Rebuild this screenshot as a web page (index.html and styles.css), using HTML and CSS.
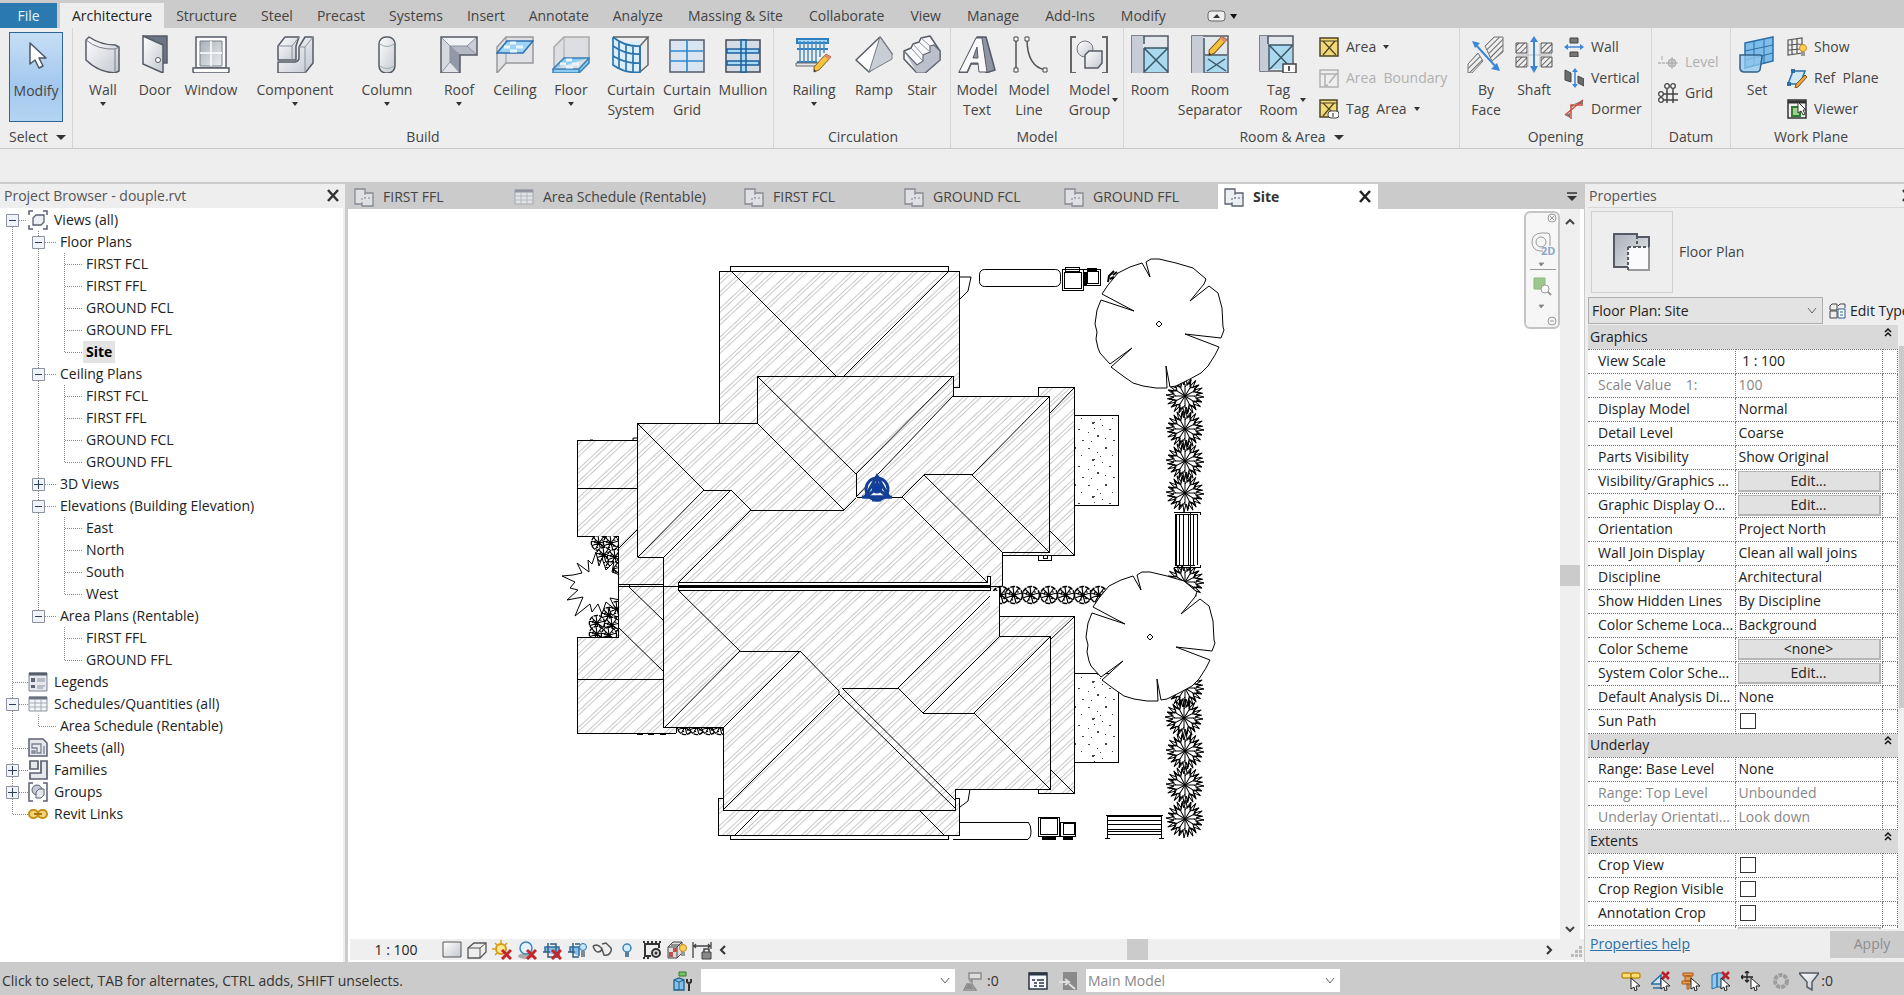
FILE: index.html
```html
<!DOCTYPE html>
<html lang="en">
<head>
<meta charset="utf-8">
<title>douple.rvt - Floor Plan: Site</title>
<link rel="stylesheet" href="styles.css">
</head>
<body>
<svg class="sprite" aria-hidden="true">
<defs>
<linearGradient id="gm" x1="0" y1="0" x2="1" y2="1"><stop offset="0" stop-color="#ffffff"/><stop offset="1" stop-color="#c3c7d0"/></linearGradient>
<linearGradient id="gd" x1="0" y1="0" x2="1" y2="1"><stop offset="0" stop-color="#a9aeb8"/><stop offset="1" stop-color="#eceef2"/></linearGradient>
<pattern id="hatch" width="21" height="21" patternUnits="userSpaceOnUse" patternTransform="rotate(-43)"><path d="M0 2.500H21M0 5.500H21M0 11.500H21M0 14.500H21" stroke="#c9c9c9" stroke-width="1" fill="none"/></pattern>
<pattern id="earth" width="4" height="4" patternUnits="userSpaceOnUse" patternTransform="rotate(45)"><path d="M0 0V4" stroke="#666" stroke-width="2"/></pattern>
<pattern id="dots" width="31" height="37" patternUnits="userSpaceOnUse"><path d="M3 4h2v1h-2zM12 8h1v1h-1zM20 3h2v2h-2zM27 11h1v1h-1zM7 15h3v1h-1v1h-2zM17 18h1v1h-1zM24 22h2v1h-2zM3 25h1v1h-1zM12 28h2v2h-2zM20 31h1v1h-1zM28 33h2v1h-2zM6 34h1v1h-1zM15 12h1v1h-1zM9 21h1v1h-1z" fill="#444"/></pattern>
</defs>
<symbol id="i-cursor" viewBox="0 0 38 38"><path d="M13 7v21l5-4 4 8 4-2-4-8h7z" fill="#fff" stroke="#4a5566" stroke-width="1.500" stroke-linejoin="round"/></symbol>
<symbol id="i-wall" viewBox="0 0 38 38"><path d="M2 5l3-3q12 8 26 8l4 2v24l-4 2q-17-1-29-13z" fill="url(#gm)" stroke="#555b66" stroke-width="1.500" stroke-linejoin="round"/><path d="M2 5q12 10 29 9v23M31 14l4-2" fill="none" stroke="#777d88"/></symbol>
<symbol id="i-door" viewBox="0 0 38 38"><path d="M7 1h24v27h-4" fill="#6d7584" stroke="#555b66" stroke-width="1.500"/><path d="M7 1l20 9v28L7 29z" fill="url(#gm)" stroke="#555b66" stroke-width="1.500"/><circle cx="22" cy="25" r="2.500" fill="#fff" stroke="#555"/></symbol>
<symbol id="i-window" viewBox="0 0 38 38"><path d="M4 2h30v31H4z" fill="#fff" stroke="#555b66" stroke-width="1.500"/><path d="M8 6h22v25H8z" fill="url(#gd)" stroke="#777d88"/><path d="M19 6v25M8 18h22" stroke="#fff" stroke-width="1.500"/><path d="M1 33h36v3q0 2-2 2H3q-2 0-2-2z" fill="#fafafa" stroke="#555b66" stroke-width="1.500"/></symbol>
<symbol id="i-component" viewBox="0 0 38 38"><path d="M2 11L9 2h14l-3 9v14H2z" fill="url(#gm)" stroke="#555b66" stroke-width="1.500" stroke-linejoin="round"/><path d="M2 11h14l7-9M16 11v14" fill="none" stroke="#8a909c"/><path d="M23 12l6-10h8v26l-8 10H2V27h17q4-1 4-4z" fill="url(#gm)" stroke="#555b66" stroke-width="1.500" stroke-linejoin="round"/><path d="M23 12h6v26M29 12l8-10" fill="none" stroke="#8a909c"/></symbol>
<symbol id="i-column" viewBox="0 0 38 38"><rect x="11" y="2" width="16" height="36" rx="7" fill="url(#gm)" stroke="#555b66" stroke-width="1.500"/><path d="M12 9q7 5 14 0M12 31q7 5 14 0" fill="none" stroke="#9aa"/></symbol>
<symbol id="i-roof" viewBox="0 0 38 38"><path d="M1 2h36v18H20v18H1z" fill="#f2f3f6"/><path d="M1 2l9 9v16L1 38z" fill="#d5d8df"/><path d="M10 11l10 9v18l-10-11z" fill="#9198a6"/><path d="M10 11h17l10 9H20z" fill="#b4b9c5"/><path d="M37 2L27 11l10 9z" fill="#c9cdd6"/><path d="M1 38l9-11 10 11z" fill="#e2e4ea"/><path d="M1 2l9 9h17l10-9M10 11v16L1 38M10 27l10 11M10 11l10 9M27 11l10 9" fill="none" stroke="#8b919e"/><path d="M1 2h36v18H20v18H1z" fill="none" stroke="#555b66" stroke-width="1.500"/></symbol>
<symbol id="i-ceiling" viewBox="0 0 38 38"><path d="M1 12L10 2h27v26H10L1 38z" fill="#dfe1e5" stroke="#999" stroke-width="1.500"/><path d="M10 2v26" stroke="#999"/><path d="M1 18L11 6h26L27 18z" fill="#9dd3f5" stroke="#2f6fb0" stroke-width="1.500"/><path d="M8 12h6M20 12h7M14 8h6M14 16h7" stroke="#e8f6ff" stroke-width="3"/></symbol>
<symbol id="i-floor" viewBox="0 0 38 38"><path d="M2 12L12 2h25v22L28 35H2z" fill="#dcdee2" stroke="#aaa" stroke-width="1.500"/><path d="M12 2v22" stroke="#aaa"/><path d="M1 34l11-11h25L27 34zM1 34v4h26l10-10v-5M27 34v4" fill="#8dcbf2" stroke="#3a7fb5" stroke-width="1.500"/><path d="M8 29h6M20 29h7M14 25h6M14 32h7" stroke="#e8f6ff" stroke-width="3"/></symbol>
<symbol id="i-csys" viewBox="0 0 38 38"><path d="M1 2q12 9 27 3v33Q12 38 1 30z" fill="#d9effc"/><path d="M1 2h35L28 11v26l8-7V2" fill="#e9ebef" stroke="#666" stroke-width="1.500"/><path d="M1 2v28q13 9 27 7V11Q13 12 1 2M7 6v28M14 9v28M21 11v27M1 11q13 9 27 8M1 21q13 8 27 7" fill="none" stroke="#2d74ad" stroke-width="1.700"/></symbol>
<symbol id="i-cgrid" viewBox="0 0 38 38"><path d="M2 5h34v32H2z" fill="#d9e6f2" stroke="#555b66" stroke-width="1.500"/><path d="M19 5v32M2 16h34M2 26h34" stroke="#2f8bd0" stroke-width="1.700"/></symbol>
<symbol id="i-mullion" viewBox="0 0 38 38"><path d="M2 5h34v32H2z" fill="#d4dde6" stroke="#444b56" stroke-width="1.500"/><path d="M3 14h32v4H3zM3 26h32v4H3zM17 5h5v32h-5z" fill="#a6daf8" stroke="#1d5f9a" stroke-width="1.500"/></symbol>
<symbol id="i-pencil" viewBox="0 0 20 20"><path d="M14 1l5 3L7 17l-5 2 0-5z" fill="#f5c33c" stroke="#7c5a20"/><path d="M14 1l5 3-2 3-5-4z" fill="#e08a70"/><path d="M2 19l0-3 2 2z" fill="#333"/></symbol>
<symbol id="i-railing" viewBox="0 0 38 38"><path d="M2 4h31v4H2zM2 14h31M2 27h20" fill="#a6daf8" stroke="#2d7fc4" stroke-width="2"/><path d="M5 6v22M9 6v22M13 6v22M17 6v22M21 6v20M25 6v16M29 6v12" stroke="#4a8cc0" stroke-width="1.500"/><path d="M1 28h22v3H1z" fill="#e8e8e8" stroke="#666"/><use href="#i-pencil" x="17" y="18" width="20" height="20"/></symbol>
<symbol id="i-ramp" viewBox="0 0 38 38"><path d="M1 25L25 2l12 17L14 37z" fill="#fff" stroke="#555b66" stroke-width="1.500" stroke-linejoin="round"/><path d="M25 2l12 17v5L14 37z" fill="#c9cdd5" stroke="#777d88"/></symbol>
<symbol id="i-stair" viewBox="0 0 38 38"><path d="M1 16l7-3 2-4 6-2 2-4 9-2 10 15v9L22 38h-8L1 24z" fill="#fafafc" stroke="#555b66" stroke-width="1.500" stroke-linejoin="round"/><path d="M1 16l13 14 6-4v-6l7-3v-6l4-1 6 6v9L22 38h-8" fill="#bcc0ca" stroke="#666c78" stroke-width="1.200"/><path d="M8 13l12 13M10 9l10 11M16 7l11 10M18 3l9 8" stroke="#8a909c"/></symbol>
<symbol id="i-mtext" viewBox="0 0 38 38"><path d="M19 2h9l9 33-9 3-2-9H13l-4 9H1z" fill="#8f95a3" stroke="#555b66" stroke-width="1.500" stroke-linejoin="round"/><path d="M18 3h6l5 34h-8l-1-9h-7l-4 9H1zM19 12l-4 11h5z" fill="#fafafa" fill-rule="evenodd" stroke="#555b66"/></symbol>
<symbol id="i-mline" viewBox="0 0 38 38"><path d="M6 4v32M17 4q0 28 19 31" fill="none" stroke="#555" stroke-width="1.500"/><path d="M4 2h4v4H4zM4 33h4v4H4zM15 2h4v4h-4zM33 33h4v4h-4z" fill="#fff" stroke="#444"/></symbol>
<symbol id="i-mgroup" viewBox="0 0 38 38"><path d="M6 2H1v36h5M32 2h5v36h-5" fill="none" stroke="#666" stroke-width="2"/><circle cx="15" cy="14" r="8" fill="url(#gm)" stroke="#777"/><path d="M15 20l4-4h13v12l-4 5H15z" fill="url(#gm)" stroke="#555b66" stroke-width="1.500"/></symbol>
<symbol id="i-room" viewBox="0 0 38 38"><path d="M1 1h36v37H1z" fill="#e4e7ec" stroke="#555b66" stroke-width="1.500"/><path d="M1 1h11v37H1z" fill="#c7ccd6"/><path d="M13 13h23v24H13z" fill="#a8d9ee"/><path d="M13 1v8M13 13h24M13 13v24M13 13l24 24M37 13L13 37" stroke="#3c5566" stroke-width="1.500"/></symbol>
<symbol id="i-roomsep" viewBox="0 0 38 38"><path d="M1 1h36v37H1z" fill="#e4e7ec" stroke="#555b66" stroke-width="1.500"/><path d="M1 1h11v37H1z" fill="#c7ccd6"/><path d="M14 21h22v16H14z" fill="#a8d9ee"/><path d="M13 3v20M14 20h22M16 36l18-12M17 24l18 12M13 20v17" stroke="#3c5566" stroke-width="1.500"/><use href="#i-pencil" x="16" y="0" width="21" height="22"/></symbol>
<symbol id="i-tagroom" viewBox="0 0 38 38"><path d="M1 1h33v35H1z" fill="#e4e7ec" stroke="#555b66" stroke-width="1.500"/><path d="M1 1h8v35H1z" fill="#c7ccd6"/><path d="M11 10h22v24H11z" fill="#a8d9ee"/><path d="M9 1v8M9 10h25M10 10v25M11 11l22 23M33 11L11 34" stroke="#3c5566" stroke-width="1.500"/><path d="M24 29h13v9H24z" fill="#fff" stroke="#444" stroke-width="1.500"/><path d="M30 31v5" stroke="#222" stroke-width="1.500"/></symbol>
<symbol id="i-byface" viewBox="0 0 38 38"><path d="M18 11l9-9h9v15l-11 9zM1 29l10-11 5 8-11 12H1z" fill="url(#earth)" stroke="#777"/><path d="M8 9l22 24" stroke="#3b86d8" stroke-width="2"/><path d="M5 6l8 2-5 5zM33 36l-9-2 6-6z" fill="#3b86d8"/></symbol>
<symbol id="i-shaft" viewBox="0 0 38 38"><path d="M1 8h11v10H1zM26 8h11v10H26zM1 22h11v10H1zM26 22h11v10H26z" fill="url(#earth)" stroke="#555"/><path d="M1 20h36M13 8v24M25 8v24" stroke="#bbb"/><path d="M19 4v31" stroke="#3b86d8" stroke-width="2"/><path d="M15 7l4-6 4 6zM15 31l4 7 4-7z" fill="#3b86d8"/></symbol>
<symbol id="i-set" viewBox="0 0 38 38"><path d="M7 8l28-6v24L7 33z" fill="#7dbdeb" stroke="#2d6ea8" stroke-width="1.500"/><path d="M16 6v25M26 4v25M7 16l28-6M7 25l28-7" stroke="#2d6ea8"/><path d="M2 20h20q2 0 2 2l-2 13q-1 2-3 2H6q-3 0-4-3z" fill="#8fc8ee" fill-opacity=".75" stroke="#35618c" stroke-width="1.500"/></symbol>
<symbol id="s-area" viewBox="0 0 20 20"><path d="M1 1h18v18H1z" fill="#f3d877" stroke="#4c4426" stroke-width="1.500"/><path d="M1 4h18M4 4l13 14M16 4L4 18" stroke="#4c4426" stroke-width="1.200"/></symbol>
<symbol id="s-bound" viewBox="0 0 20 20"><path d="M1 2h18v17H1zM1 6h18M6 6v13M10 15l8-10M6 18l3-1" fill="none" stroke="#b3b3b3" stroke-width="1.500"/></symbol>
<symbol id="s-tagarea" viewBox="0 0 20 20"><path d="M1 1h17v17H1z" fill="#f3d877" stroke="#4c4426" stroke-width="1.500"/><path d="M1 4h17M4 4l12 12M15 4L4 17" stroke="#4c4426" stroke-width="1.200"/><rect x="9" y="12" width="11" height="7" rx="3" fill="#fff" stroke="#444"/><path d="M14 14v4" stroke="#222"/></symbol>
<symbol id="s-opwall" viewBox="0 0 20 20"><path d="M6 1h8v5H6zM6 15h8v5H6z" fill="#777" stroke="#444"/><path d="M3 10h14" stroke="#3b86d8" stroke-width="1.500"/><path d="M0 10l4-3v6zM20 10l-4-3v6z" fill="#3b86d8"/></symbol>
<symbol id="s-opvert" viewBox="0 0 20 20"><path d="M1 2l6 3v9l-6-2zM14 8l6 3v7l-6-3z" fill="#6c6c6c" stroke="#444"/><path d="M11 2v16" stroke="#3b86d8" stroke-width="1.500"/><path d="M11 0l3 4H8zM11 20l3-4H8z" fill="#3b86d8"/></symbol>
<symbol id="s-dormer" viewBox="0 0 20 20"><path d="M19 1v4h-9l-1 3-3-1z" fill="#777"/><path d="M1 16l5-2v5z" fill="#777"/><path d="M1 16L19 1M19 6H7v14" fill="none" stroke="#c9503c" stroke-width="1.500"/></symbol>
<symbol id="s-level" viewBox="0 0 20 20"><path d="M0 11h9" stroke="#b5b5b5" stroke-width="1.500" stroke-dasharray="3 1"/><circle cx="14" cy="11" r="4" fill="#c9c9c9" stroke="#aaa"/><path d="M14 5v12M8 11h12M4 4v4" stroke="#aaa"/></symbol>
<symbol id="s-grid" viewBox="0 0 20 20"><path d="M9 6v14M15 6v14M5 11h15M5 17h15" stroke="#444" stroke-width="1.500"/><g fill="#fff" stroke="#444" stroke-width="1.300"><circle cx="9" cy="3" r="2.300"/><circle cx="15" cy="3" r="2.300"/><circle cx="3" cy="11" r="2.300"/><circle cx="3" cy="17" r="2.300"/></g></symbol>
<symbol id="s-show" viewBox="0 0 20 20"><path d="M1 3l14-2v15L1 18zM5 3v15M10 2v15M1 8l14-1M1 13l14-1" fill="#eee" stroke="#555" stroke-width="1.200"/><circle cx="16" cy="11" r="3.500" fill="#ffd257" stroke="#c48a20"/><path d="M14 15h4v4h-4z" fill="#999"/></symbol>
<symbol id="s-refplane" viewBox="0 0 20 20"><path d="M6 3h12l-5 13H1z" fill="#cfe8f8" stroke="#2d6ea8" stroke-width="1.500"/><path d="M4 1h4v4H4zM0 14h4v4H0z" fill="#2d6ea8"/><path d="M18 7l2 2-9 10-3 1 1-4z" fill="#e8a33c" stroke="#7c5a20"/></symbol>
<symbol id="s-viewer" viewBox="0 0 20 20"><path d="M1 1h18v18H1z" fill="#eef3ee" stroke="#333" stroke-width="1.500"/><path d="M1 3h18" stroke="#333" stroke-width="3"/><path d="M5 8h8v9H5z" fill="#9bd18c" stroke="#2f7d2f" stroke-width="2"/><path d="M11 3v11l3-2 2 4 2-1-2-4h3z" fill="#fff" stroke="#333"/></symbol>
<symbol id="v" viewBox="0 0 26 22"><path d="M12.500 0v22" class="dot"/></symbol>
<symbol id="tee" viewBox="0 0 26 22"><path d="M12.500 0v22M13 11.500h18" class="dot"/></symbol>
<symbol id="end" viewBox="0 0 26 22"><path d="M12.500 0v12M13 11.500h18" class="dot"/></symbol>
<symbol id="top" viewBox="0 0 26 22"><path d="M12.500 12v10M13 11.500h14" class="dot"/></symbol>
<symbol id="minus" viewBox="0 0 26 22"><path d="M6.500 5.500h12v12h-12z" fill="#f0f3f8" stroke="#8b93a3"/><path d="M9 11.500h7" stroke="#2c3d5c"/></symbol>
<symbol id="plus" viewBox="0 0 26 22"><path d="M6.500 5.500h12v12h-12z" fill="#f0f3f8" stroke="#8b93a3"/><path d="M8 11.500h9M12.500 7v9" stroke="#2c3d5c"/></symbol>
<symbol id="t-views" viewBox="0 0 20 20"><path d="M5 1H1v4M15 1h4v4M1 15v4h4M19 15v4h-4" fill="none" stroke="#5a6070" stroke-width="1.500"/><path d="M5 8l3-3h8v7l-3 3H5z" fill="#eef0f5" stroke="#5a6070" stroke-width="1.300"/></symbol>
<symbol id="t-legends" viewBox="0 0 20 20"><path d="M1 1h18v18H1z" fill="#e6e8ee" stroke="#7b8290"/><path d="M1 2h18" stroke="#565d6b" stroke-width="3"/><path d="M3 6h4v4H3zM3 13h4v3H3z" fill="#5d6575"/><path d="M9 7h8M9 9h8M9 14h8M9 16h6" stroke="#8a91a0"/></symbol>
<symbol id="t-sched" viewBox="0 0 20 20"><path d="M1 3h18v14H1z" fill="#f4f5f8" stroke="#8a91a0"/><path d="M1 4h18" stroke="#6b7280" stroke-width="3"/><path d="M1 9h18M1 13h18M7 5v12M13 5v12" stroke="#a5abb8"/></symbol>
<symbol id="t-sheets" viewBox="0 0 20 20"><path d="M1 1h14l4 4v13H1z" fill="#e6e8ee" stroke="#5a6070" stroke-width="1.500"/><path d="M4 6h9v9h-4v-5H4zM4 13h3v2H4zM16 8v8" fill="none" stroke="#7b8290" stroke-width="1.300"/></symbol>
<symbol id="t-fam" viewBox="0 0 20 20"><path d="M2 1h8v8H2zM13 1h6v18H2v-6h11z" fill="#e6e8ee" stroke="#5a6070" stroke-width="1.700"/></symbol>
<symbol id="t-groups" viewBox="0 0 20 20"><path d="M5 1H1v18h4M15 1h4v18h-4" fill="none" stroke="#5a6070" stroke-width="1.500"/><circle cx="9" cy="8" r="5" fill="#c6cad6" stroke="#5a6070"/><path d="M8 10l3-3h5v6l-3 3H8z" fill="#e6e8ee" stroke="#5a6070"/></symbol>
<symbol id="t-links" viewBox="0 0 20 20"><rect x="1" y="6" width="9" height="8" rx="4" fill="#f2d57a" stroke="#c48f12" stroke-width="2"/><rect x="10" y="6" width="9" height="8" rx="4" fill="#f2d57a" stroke="#c48f12" stroke-width="2"/><path d="M6 10h8" stroke="#a87608" stroke-width="2"/></symbol>
<symbol id="d-plan" viewBox="0 0 20 20"><path d="M1 2h10v4h8v13H8v-2H1z" fill="#eceef2" stroke="#5a6070" stroke-width="1.300"/><path d="M8 17v-6h11M11 6v5" fill="none" stroke="#5a6070" stroke-dasharray="2 2"/></symbol>
<symbol id="big-plan" viewBox="0 0 40 40"><path d="M2 2h23v3h12v33H16v-3H2z" fill="url(#gd)"/><path d="M16 15h21v23H16z" fill="#fbfbfd"/><path d="M25 4V2H2v33h14M37 15V5H25" fill="none" stroke="#555b66" stroke-width="2"/><path d="M16 38h21V15" fill="none" stroke="#999" stroke-width="2"/><path d="M25 4v11M16 15h21M16 15v23" fill="none" stroke="#555b66" stroke-width="2" stroke-dasharray="3 2"/></symbol>
<symbol id="redx" viewBox="0 0 20 20"><path d="M10 10l9 9M19 10l-9 9" stroke="#c3272b" stroke-width="3"/></symbol>
<symbol id="c-detail" viewBox="0 0 20 20"><path d="M1 2h18v15H1z" fill="url(#gm)" stroke="#555"/></symbol>
<symbol id="c-style" viewBox="0 0 20 20"><path d="M1 8l6-5h12v9l-6 6H1z" fill="#eee" stroke="#555" stroke-width="1.300"/><path d="M1 8h12v10M13 8l6-5" fill="none" stroke="#555"/></symbol>
<symbol id="c-sun" viewBox="0 0 20 20"><circle cx="9" cy="9" r="5" fill="#ffe88c" stroke="#d79a1c" stroke-width="2"/><path d="M9 0v3M0 9h3M3 3l2 2M15 3l-2 2M3 15l2-2" stroke="#d79a1c" stroke-width="1.500"/><use href="#redx"/></symbol>
<symbol id="c-shadow" viewBox="0 0 20 20"><ellipse cx="9" cy="16" rx="8" ry="3" fill="#aaa"/><circle cx="9" cy="8" r="6" fill="#e3f3fc" stroke="#3d84ba" stroke-width="1.500"/><use href="#redx"/></symbol>
<symbol id="c-crop" viewBox="0 0 20 20"><path d="M3 12V7h14v9" fill="#85c0ea" stroke="#2d6ea8" stroke-width="1.500"/><path d="M6 3v14h10M1 12h7M8 4h6v12" fill="none" stroke="#3a5c7c" stroke-width="1.500"/><use href="#redx"/></symbol>
<symbol id="c-cropv" viewBox="0 0 20 20"><path d="M3 12V7h9v9" fill="#85c0ea" stroke="#2d6ea8" stroke-width="1.500"/><path d="M6 3v14h6M1 12h7M8 4h5" fill="none" stroke="#3a5c7c" stroke-width="1.500"/><circle cx="16" cy="7" r="3.500" fill="#c3e5fa" stroke="#2d6ea8"/><path d="M14 11h4v6h-4z" fill="#7f8b98"/></symbol>
<symbol id="c-hide" viewBox="0 0 20 20"><path d="M1 6q2 6 5 6t4-3l2 6q4 1 6-2t1-5M1 6l3-1M19 8l-5-5-4 1M10 9q-3-4-6-4" fill="none" stroke="#555" stroke-width="1.500"/></symbol>
<symbol id="c-bulb" viewBox="0 0 20 20"><circle cx="10" cy="8" r="4" fill="#d4edfb" stroke="#3d84ba" stroke-width="1.500"/><path d="M8 12h4v5H8z" fill="#5d7f9d"/></symbol>
<symbol id="c-temp" viewBox="0 0 20 20"><path d="M2 4h15v4M3 4v12h6" fill="none" stroke="#333" stroke-width="2"/><path d="M1 2h18M1 18h8" stroke="#333" stroke-width="2" stroke-dasharray="2 2"/><circle cx="14" cy="13" r="4" fill="#ddd" stroke="#333" stroke-width="2"/><circle cx="14" cy="13" r="1.500" fill="#333"/></symbol>
<symbol id="c-anal" viewBox="0 0 20 20"><path d="M1 7l5-5h9v11l-5 5H1zM1 7h9v11M10 7l5-5M4 5h9" fill="#ddd" stroke="#444"/><path d="M2 12h4v5H2zM6 8h4v4H6z" fill="#c0504d"/><circle cx="16" cy="8" r="3.500" fill="#ffd257" stroke="#c48a20"/><path d="M14 12h4v4h-4z" fill="#999"/></symbol>
<symbol id="c-cons" viewBox="0 0 20 20"><path d="M1 2v16M19 2v7M2 6h16M4 4L2 6l2 2M16 4l2 2-2 2" fill="none" stroke="#444" stroke-width="1.300"/><path d="M10 12h9v7h-9z" fill="#888" stroke="#444"/><path d="M12 12V9h5v3" fill="none" stroke="#444" stroke-width="1.500"/></symbol>
<symbol id="ptr" viewBox="0 0 20 20"><path d="M10 7v11l3-2 1 4 2-1-1-4h4z" fill="#fff" stroke="#222"/></symbol>
<symbol id="b-link" viewBox="0 0 20 20"><rect x="1" y="2" width="9" height="5" rx="2" fill="#ffe07a" stroke="#c48f12" stroke-width="1.500"/><rect x="10" y="2" width="9" height="5" rx="2" fill="#ffe07a" stroke="#c48f12" stroke-width="1.500"/><use href="#ptr"/></symbol>
<symbol id="b-under" viewBox="0 0 20 20"><path d="M0 13l10-9v9zM2 17h9" fill="#cfe5f5" stroke="#2d6ea8" stroke-width="1.500"/><path d="M11 1l7 7M18 1l-7 7" stroke="#b8212a" stroke-width="2.500"/><use href="#ptr"/></symbol>
<symbol id="b-pin" viewBox="0 0 20 20"><path d="M2 2h10v3H2zM4 5h6v5H4zM1 10h12v3H1zM6 13h2v5H6z" fill="#ee9a4d" stroke="#a65a1c"/><use href="#ptr"/></symbol>
<symbol id="b-face" viewBox="0 0 20 20"><path d="M1 4l5-2v14l-5 2zM6 2h7v14H6z" fill="#8fc8ee" stroke="#2d6ea8"/><path d="M11 1l7 7M18 1l-7 7" stroke="#b8212a" stroke-width="2.500"/><use href="#ptr"/></symbol>
<symbol id="b-drag" viewBox="0 0 20 20"><path d="M6 0v11M0 6h12M4 2l2-2 2 2M4 9l2 2 2-2M2 4L0 6l2 2" fill="none" stroke="#222" stroke-width="1.300"/><use href="#ptr"/></symbol>
<symbol id="b-gear" viewBox="0 0 20 20"><circle cx="10" cy="10" r="6" fill="none" stroke="#9d9d9d" stroke-width="4" stroke-dasharray="4 1"/></symbol>
<symbol id="b-filter" viewBox="0 0 20 20"><path d="M0 2h20l-7 9v8l-5-3v-5z" fill="url(#gm)" stroke="#555b66" stroke-width="1.500"/></symbol>
<symbol id="b-work" viewBox="0 0 20 20"><path d="M1 9l5-2 5 2v10H1z" fill="#85c0ea" stroke="#1d5f8a" stroke-width="1.300"/><path d="M1 9l5 2 5-2M6 11v8" stroke="#1d5f8a" fill="none"/><path d="M6 1h7v4H6z" fill="#7ac36a" stroke="#2f7d2f"/><path d="M14 8v3q2 2 4 0V8M16 12v8" fill="none" stroke="#333" stroke-width="2"/></symbol>
<symbol id="b-req" viewBox="0 0 20 20"><path d="M6 2h12v6H6zM9 8v4M1 19l3-6h5l4 6zM6 10h3" fill="#dcdcdc" stroke="#8d8d8d" stroke-width="1.500"/><path d="M2 18l3-5h3l3 5z" fill="#8d8d8d"/></symbol>
<symbol id="b-opt" viewBox="0 0 20 20"><path d="M1 2h18v16H1z" fill="#f5f7fa" stroke="#2b3544" stroke-width="1.500"/><path d="M1 3h18" stroke="#2b3544" stroke-width="3"/><path d="M4 9h3M9 9h7M6 12h3M11 12h5M6 15h3M11 15h5" stroke="#2b3544" stroke-width="1.500"/></symbol>
<symbol id="b-add" viewBox="0 0 20 20"><path d="M5 1h14v18H5z" fill="#8a8a8a"/><path d="M1 11h9M7 8l4 3-4 3M11 13l6 5" stroke="#e0e0e0" stroke-width="2" fill="none"/></symbol>
<symbol id="bush" viewBox="-20 -20 40 40"><g id="q"><path id="lf" d="M0 0V-12M0-9l3-4M-4-10L-3-16-1-11 1-19 2-12 6-17 4-11" fill="none" stroke="#000" stroke-width="1"/><use href="#lf" transform="rotate(32)"/><use href="#lf" transform="rotate(62)"/></g><use href="#q" transform="rotate(90)"/><use href="#q" transform="rotate(180)"/><use href="#q" transform="rotate(270)"/></symbol>
<symbol id="shrub" viewBox="-10 -10 20 20"><circle r="8.500" fill="#fff" stroke="#000" stroke-width="1.500" stroke-dasharray="5 1"/><path d="M0 0L-8-2M0 0L-6-6M0 0L-1-8M0 0L5-7M0 0L8-2M0 0L7 5M0 0L2 8M0 0L-4 7M0 0L-8 3M-5 0l1-3M3-3l2 0M2 3l2 1M-3 4l2 1" stroke="#000" stroke-width="1.200"/></symbol>
<symbol id="canopy" viewBox="-68 -68 136 136"><path d="M0-65L17-61 34-56 47-45 45-40 31-23 50-38 59-31 63-16 64 3 65 6 62 14 26 10 60 23 56 31 49 42 42 49 31 55 17 62 11 63 7 42 8 64-3 64-16 62-26 59-36 52-48 43-27 24-49 40-59 29-61 24-63 15-62 8-64 0-63-7-62-14-58-24-25-13-57-30-51-39-41-51-29-57-17-61-9-47-13-62-8-65z" fill="#fff" stroke="#000"/><path d="M0-3L3 0 0 3-3 0z" fill="none" stroke="#000"/></symbol>
<symbol id="chev2" viewBox="0 0 10 10"><path d="M2 5l3-3 3 3M2 9l3-3 3 3" fill="none" stroke="#111" stroke-width="1.500"/></symbol>
</svg>

<header class="menubar">
<button class="file">File</button>
<nav class="menu">
<button class="on">Architecture</button><button>Structure</button><button>Steel</button><button>Precast</button><button>Systems</button><button>Insert</button><button>Annotate</button><button>Analyze</button><button>Massing &amp; Site</button><button>Collaborate</button><button>View</button><button>Manage</button><button>Add-Ins</button><button>Modify</button>
</nav>
<button class="toggle" aria-label="Minimize ribbon"><svg width="30" height="14" viewBox="0 0 30 14"><rect x="1" y="2" width="17" height="10" rx="3" fill="#eee" stroke="#666"/><path d="M6 9h7l-3-4z" fill="#333"/><path d="M23 5h7l-3 5z" fill="#111"/></svg></button>
</header>

<section class="ribbon">
<div class="panel select"><div class="tools"><button class="tool active"><svg class="i38"><use href="#i-cursor"/></svg><span>Modify</span></button></div><h2>Select <i class="caret big"></i></h2></div>
<div class="panel"><div class="tools">
<button class="tool w56"><svg class="i38"><use href="#i-wall"/></svg><span>Wall</span><i class="caret"></i></button>
<button class="tool w48"><svg class="i38"><use href="#i-door"/></svg><span>Door</span></button>
<button class="tool w64"><svg class="i38"><use href="#i-window"/></svg><span>Window</span></button>
<button class="tool w104"><svg class="i38"><use href="#i-component"/></svg><span>Component</span><i class="caret"></i></button>
<button class="tool w80"><svg class="i38"><use href="#i-column"/></svg><span>Column</span><i class="caret"></i></button>
<button class="tool w64"><svg class="i38"><use href="#i-roof"/></svg><span>Roof</span><i class="caret"></i></button>
<button class="tool w48"><svg class="i38"><use href="#i-ceiling"/></svg><span>Ceiling</span></button>
<button class="tool w64"><svg class="i38"><use href="#i-floor"/></svg><span>Floor</span><i class="caret"></i></button>
<button class="tool w56"><svg class="i38"><use href="#i-csys"/></svg><span>Curtain<br>System</span></button>
<button class="tool w56"><svg class="i38"><use href="#i-cgrid"/></svg><span>Curtain<br>Grid</span></button>
<button class="tool w56"><svg class="i38"><use href="#i-mullion"/></svg><span>Mullion</span></button>
</div><h2>Build</h2></div>
<div class="panel circulation"><div class="tools">
<button class="tool w72"><svg class="i38"><use href="#i-railing"/></svg><span>Railing</span><i class="caret"></i></button>
<button class="tool w48"><svg class="i38"><use href="#i-ramp"/></svg><span>Ramp</span></button>
<button class="tool w48"><svg class="i38"><use href="#i-stair"/></svg><span>Stair</span></button>
</div><h2>Circulation</h2></div>
<div class="panel"><div class="tools">
<button class="tool w48"><svg class="i38"><use href="#i-mtext"/></svg><span>Model<br>Text</span></button>
<button class="tool w56"><svg class="i38"><use href="#i-mline"/></svg><span>Model<br>Line</span></button>
<button class="tool w64"><svg class="i38"><use href="#i-mgroup"/></svg><span class="side"><span>Model<br>Group</span><i class="caret"></i></span></button>
</div><h2>Model</h2></div>
<div class="panel room"><div class="tools">
<button class="tool w48"><svg class="i38"><use href="#i-room"/></svg><span>Room</span></button>
<button class="tool w72"><svg class="i38"><use href="#i-roomsep"/></svg><span>Room<br>Separator</span></button>
<button class="tool w64"><svg class="i38"><use href="#i-tagroom"/></svg><span class="side"><span>Tag<br>Room</span><i class="caret"></i></span></button>
<div class="stack"><button><svg class="i20"><use href="#s-area"/></svg>Area<i class="caret"></i></button><button class="off" disabled><svg class="i20"><use href="#s-bound"/></svg>Area&nbsp; Boundary</button><button><svg class="i20"><use href="#s-tagarea"/></svg>Tag&nbsp; Area<i class="caret"></i></button></div>
</div><h2>Room &amp; Area <i class="caret big"></i></h2></div>
<div class="panel opening"><div class="tools">
<button class="tool w48"><svg class="i38"><use href="#i-byface"/></svg><span>By<br>Face</span></button>
<button class="tool w48"><svg class="i38"><use href="#i-shaft"/></svg><span>Shaft</span></button>
<div class="stack"><button><svg class="i20"><use href="#s-opwall"/></svg>Wall</button><button><svg class="i20"><use href="#s-opvert"/></svg>Vertical</button><button><svg class="i20"><use href="#s-dormer"/></svg>Dormer</button></div>
</div><h2>Opening</h2></div>
<div class="panel datum"><div class="tools">
<div class="stack two"><button class="off" disabled><svg class="i20"><use href="#s-level"/></svg>Level</button><button><svg class="i20"><use href="#s-grid"/></svg>Grid</button></div>
</div><h2>Datum</h2></div>
<div class="panel work"><div class="tools">
<button class="tool w48"><svg class="i38"><use href="#i-set"/></svg><span>Set</span></button>
<div class="stack"><button><svg class="i20"><use href="#s-show"/></svg>Show</button><button><svg class="i20"><use href="#s-refplane"/></svg>Ref&nbsp; Plane</button><button><svg class="i20"><use href="#s-viewer"/></svg>Viewer</button></div>
</div><h2>Work Plane</h2></div>
</section>
<div class="options"></div>

<main class="work-area">
<aside class="browser">
<div class="dock-title"><span>Project Browser - douple.rvt</span><button aria-label="Close"><svg width="14" height="14" viewBox="0 0 14 14"><path d="M2 1l10 11M12 1L2 12" stroke="#333" stroke-width="2.500"/></svg></button></div>
<ul class="tree">
<li><svg class="g"><use href="#top"/><use href="#minus"/></svg><svg class="i20"><use href="#t-views"/></svg><span>Views (all)</span></li>
<li><svg class="g"><use href="#v"/></svg><svg class="g"><use href="#tee"/><use href="#minus"/></svg><span>Floor Plans</span></li>
<li><svg class="g"><use href="#v"/></svg><svg class="g"><use href="#v"/></svg><svg class="g"><use href="#tee"/></svg><span>FIRST FCL</span></li>
<li><svg class="g"><use href="#v"/></svg><svg class="g"><use href="#v"/></svg><svg class="g"><use href="#tee"/></svg><span>FIRST FFL</span></li>
<li><svg class="g"><use href="#v"/></svg><svg class="g"><use href="#v"/></svg><svg class="g"><use href="#tee"/></svg><span>GROUND FCL</span></li>
<li><svg class="g"><use href="#v"/></svg><svg class="g"><use href="#v"/></svg><svg class="g"><use href="#tee"/></svg><span>GROUND FFL</span></li>
<li><svg class="g"><use href="#v"/></svg><svg class="g"><use href="#v"/></svg><svg class="g"><use href="#end"/></svg><span class="current">Site</span></li>
<li><svg class="g"><use href="#v"/></svg><svg class="g"><use href="#tee"/><use href="#minus"/></svg><span>Ceiling Plans</span></li>
<li><svg class="g"><use href="#v"/></svg><svg class="g"><use href="#v"/></svg><svg class="g"><use href="#tee"/></svg><span>FIRST FCL</span></li>
<li><svg class="g"><use href="#v"/></svg><svg class="g"><use href="#v"/></svg><svg class="g"><use href="#tee"/></svg><span>FIRST FFL</span></li>
<li><svg class="g"><use href="#v"/></svg><svg class="g"><use href="#v"/></svg><svg class="g"><use href="#tee"/></svg><span>GROUND FCL</span></li>
<li><svg class="g"><use href="#v"/></svg><svg class="g"><use href="#v"/></svg><svg class="g"><use href="#end"/></svg><span>GROUND FFL</span></li>
<li><svg class="g"><use href="#v"/></svg><svg class="g"><use href="#tee"/><use href="#plus"/></svg><span>3D Views</span></li>
<li><svg class="g"><use href="#v"/></svg><svg class="g"><use href="#tee"/><use href="#minus"/></svg><span>Elevations (Building Elevation)</span></li>
<li><svg class="g"><use href="#v"/></svg><svg class="g"><use href="#v"/></svg><svg class="g"><use href="#tee"/></svg><span>East</span></li>
<li><svg class="g"><use href="#v"/></svg><svg class="g"><use href="#v"/></svg><svg class="g"><use href="#tee"/></svg><span>North</span></li>
<li><svg class="g"><use href="#v"/></svg><svg class="g"><use href="#v"/></svg><svg class="g"><use href="#tee"/></svg><span>South</span></li>
<li><svg class="g"><use href="#v"/></svg><svg class="g"><use href="#v"/></svg><svg class="g"><use href="#end"/></svg><span>West</span></li>
<li><svg class="g"><use href="#v"/></svg><svg class="g"><use href="#end"/><use href="#minus"/></svg><span>Area Plans (Rentable)</span></li>
<li><svg class="g"><use href="#v"/></svg><svg class="g"></svg><svg class="g"><use href="#tee"/></svg><span>FIRST FFL</span></li>
<li><svg class="g"><use href="#v"/></svg><svg class="g"></svg><svg class="g"><use href="#end"/></svg><span>GROUND FFL</span></li>
<li><svg class="g"><use href="#tee"/></svg><svg class="i20"><use href="#t-legends"/></svg><span>Legends</span></li>
<li><svg class="g"><use href="#tee"/><use href="#minus"/></svg><svg class="i20"><use href="#t-sched"/></svg><span>Schedules/Quantities (all)</span></li>
<li><svg class="g"><use href="#v"/></svg><svg class="g"><use href="#end"/></svg><span>Area Schedule (Rentable)</span></li>
<li><svg class="g"><use href="#tee"/></svg><svg class="i20"><use href="#t-sheets"/></svg><span>Sheets (all)</span></li>
<li><svg class="g"><use href="#tee"/><use href="#plus"/></svg><svg class="i20"><use href="#t-fam"/></svg><span>Families</span></li>
<li><svg class="g"><use href="#tee"/><use href="#plus"/></svg><svg class="i20"><use href="#t-groups"/></svg><span>Groups</span></li>
<li><svg class="g"><use href="#end"/></svg><svg class="i20"><use href="#t-links"/></svg><span>Revit Links</span></li>
</ul>
</aside>

<section class="views">
<div class="doc-tabs">
<button><svg class="i20"><use href="#d-plan"/></svg>FIRST FFL</button>
<button class="wide"><svg class="i20"><use href="#t-sched"/></svg>Area Schedule (Rentable)</button>
<button><svg class="i20"><use href="#d-plan"/></svg>FIRST FCL</button>
<button><svg class="i20"><use href="#d-plan"/></svg>GROUND FCL</button>
<button><svg class="i20"><use href="#d-plan"/></svg>GROUND FFL</button>
<button class="on"><svg class="i20"><use href="#d-plan"/></svg><span>Site</span><svg class="x" width="14" height="14" viewBox="0 0 14 14"><path d="M2 1l10 11M12 1L2 12" stroke="#222" stroke-width="2.500"/></svg></button>
<button class="list" aria-label="Open views"><svg width="12" height="10" viewBox="0 0 12 10"><path d="M1 1h10" stroke="#333" stroke-width="1.500"/><path d="M1 4h10L6 9z" fill="#333"/></svg></button>
</div>
<div class="stage">
<div class="canvas">
<svg class="plan" viewBox="350 209 1210 730" role="img" aria-label="Site plan">
<g fill="url(#hatch)">
<path d="M719 271H959V387H953V376H757V423H719z"/>
<path d="M757 376H953V396H1049V387H1074V555H1002V586H999V616H1074V793H1050V789H955V810H723V727H676V733H577V637H618V536H577V441H638V423H757z"/>
<path d="M719 798V835H959V798H955V810H723V798z"/>
<path d="M1038 387H1050V396H1038zM1038 789H1050V793H1038z"/>
</g>
<path d="M1074 415H1118V505H1074zM1074 673H1118V762H1074z" fill="url(#dots)"/>
<g fill="none" stroke="#000" shape-rendering="crispEdges">
<path d="M719.500 423V271.500H959.500V387.500H953.500M730.500 271V266.500H948.500V271"/>
<path d="M757.500 423V376.500H953.500V396.500H1049.500V552.500H1002.500V586.500M856.500 474V497M857 497.500H902M924 474.500H972"/>
<path d="M637.500 557V423.500H757M637.500 557.500H663.500V727.500H723.500V810.500H955.500V789.500H1050.500V636.500H999.500V587"/>
<path d="M704 490.500H731M751 510.500H844M637 440.500H577.500V536.500H618.500V637.500H577.500V733.500H676M577 488.500H637M577 679.500H663M676.500 727V733M618 584.500H663M618 586.500H680M629.500 584V587M991 586.500H1002"/>
<path d="M740 651.500H800M842 688.500H898M923 713.500H974M999 616.500H1074.500V793.500H1038.500V789M1038.500 396V387.500H1074.500V555.500H1003M1038.500 555V560.500H1051.500V555M1043.500 556V558.500H1047.500V556"/>
<path d="M723 798.500H718.500V835.500H959.500V798.500H955M730.500 835V839.500H948.500V836M953 839.500H1028M960 822.500H1028"/>
<path d="M1074 415.500H1118.500V505.500H1074M1074 673.500H1118.500V762.500H1074"/>
</g>
<g fill="none" stroke="#000" stroke-width="1">
<path d="M731 271L836 376M949 271L844 376M757 376L856 474 953 376M856 497L953 396M902 497L924 475M972 475L1049 397M924 475L1002 552M972 475L1049 552M902 497L987 582M637 423L704 490M731 490L751 510M844 510L856 498M757 423L844 510M704 490L638 557M731 490L664 557M751 510L678 583M618 549L637 530"/>
<path d="M629 587L663 620M618 627L663 671M678 590L740 651M800 651L839 691V694L723 810M740 651L665 727M800 651L724 727M842 688L955 800M839 694L955 808M898 688L998 588M898 688L923 713 999 637M974 713L1050 637M974 713L1050 789M1074 617L1050 640M1050 769L1074 793M1074 388L1050 413M1050 531L1074 555M759 811L735 835M920 811L944 835"/>
<path d="M960 277H971L968 291 960 299M970 789L968 801 960 807M1028 822Q1031 825 1031 831 1031 838 1028 839"/>
<rect x="979.500" y="269.500" width="81" height="17" rx="5"/>
</g>
<g fill="#fff" stroke="#000" shape-rendering="crispEdges">
<path d="M678.500 582.500H987.500V576.500H990.500V590.500H678.500z"/>
<path d="M678 586.500H990" stroke-width="3"/>
<path d="M1062.500 269.500H1083.500V290.500H1062.500zM1065.500 267.500H1079.500V271.500H1065.500zM1064.500 272.500H1081.500V288.500H1064.500zM1083.500 269.500H1100.500V285.500H1083.500zM1087.500 271.500H1098.500V283.500H1087.500z" stroke-width="1"/>
<path d="M1038.500 817.500H1059.500V836.500H1038.500zM1040.500 818.500H1057.500V834.500H1040.500zM1060.500 822.500H1075.500V836.500H1060.500zM1063.500 823.500H1074.500V834.500H1063.500z"/>
<path d="M1042 838H1056M1063 838H1073M1087 269H1097M1085 272V286" stroke-width="3"/>
</g>
<use href="#bush" x="1165" y="376" width="40" height="40"/><use href="#bush" x="1165" y="409" width="40" height="40"/><use href="#bush" x="1165" y="441" width="40" height="40"/><use href="#bush" x="1165" y="473" width="40" height="40"/><use href="#bush" x="1165" y="562" width="40" height="40"/><use href="#bush" x="1165" y="668" width="40" height="40"/><use href="#bush" x="1164" y="698" width="40" height="40"/><use href="#bush" x="1165" y="731" width="40" height="40"/><use href="#bush" x="1165" y="765" width="40" height="40"/><use href="#bush" x="1165" y="799" width="40" height="40"/>
<use href="#shrub" x="991" y="585" width="20" height="20"/><path d="M990 591H999V606H990z" fill="#fff"/><path d="M999.500 587V616" stroke="#000"/><use href="#shrub" x="1004" y="585" width="20" height="20"/><use href="#shrub" x="1021" y="585" width="20" height="20"/><use href="#shrub" x="1039" y="585" width="20" height="20"/><use href="#shrub" x="1056" y="585" width="20" height="20"/><use href="#shrub" x="1073" y="585" width="20" height="20"/><use href="#shrub" x="1089" y="585" width="20" height="20"/>
<path d="M1108 282L1109 276 1114 271M1110 279l4-2M1113 275l4-3" fill="none" stroke="#000" stroke-width="2"/>
<use href="#canopy" x="1091" y="256" width="136" height="136"/>
<use href="#canopy" x="1082" y="569" width="136" height="136"/>
<g fill="#fff" stroke="#000" shape-rendering="crispEdges">
<path d="M1175.500 514.500H1197.500V565.500H1175.500z"/><path d="M1179.500 514V565M1183.500 514V565M1188.500 514V565M1193.500 514V565M1176.500 514V565M1174 512.500H1200V514.500M1174 567.500H1200V565M1190 512.500V568"/>
<path d="M1107.500 816.500H1161.500V834.500H1107.500zM1107 820.500H1161M1107 824.500H1161M1107 829.500H1161M1107 831.500H1161M1106 815.500H1163M1107 815V838M1161.500 815V838M1105 838.500H1110M1159 838.500H1164"/>
</g>
<clipPath id="cl"><path d="M560 536H618V637H560z"/></clipPath>
<g clip-path="url(#cl)">
<use href="#shrub" x="590" y="534" width="18" height="18"/><use href="#shrub" x="602" y="534" width="18" height="18"/><use href="#shrub" x="595" y="546" width="18" height="18"/><use href="#shrub" x="606" y="548" width="18" height="18"/><use href="#shrub" x="604" y="560" width="18" height="18"/>
<use href="#shrub" x="600" y="606" width="18" height="18"/><use href="#shrub" x="608" y="600" width="18" height="18"/><use href="#shrub" x="588" y="614" width="18" height="18"/><use href="#shrub" x="603" y="616" width="18" height="18"/><use href="#shrub" x="588" y="625" width="18" height="18"/><use href="#shrub" x="600" y="626" width="18" height="18"/>
<path d="M596 552L592 564 588 560 589 572 577 563 582 573 573 575 562 576 575 582 570 588 578 590 567 600 583 597 575 616 590 604 592 612 598 604 602 614 606 602 616 610 610 598 620 600V575L612 572 614 562 606 570 602 558 599 566z" fill="#fff" stroke="#000"/>
</g>
<clipPath id="cb"><path d="M640 728H723V736H640z"/></clipPath>
<g clip-path="url(#cb)"><use href="#shrub" x="676" y="718" width="18" height="18"/><use href="#shrub" x="688" y="718" width="18" height="18"/><use href="#shrub" x="700" y="718" width="18" height="18"/><use href="#shrub" x="711" y="718" width="18" height="18"/></g>
<path d="M637 734h6M648 734h6M660 734h6" stroke="#000" stroke-width="2"/>
<path d="M633 440v-2h4M590 440h3" stroke="#000" stroke-width="1" fill="none"/>
<g fill="#fff" stroke="#133f94" stroke-width="3"><circle cx="877" cy="489" r="11"/><path d="M877 476L889 497H865z"/><path d="M877 476V488L866 497M877 488L888 497M872 500h9" fill="none"/><path d="M862 497H892" stroke-width="3"/><circle cx="877" cy="488" r="4" fill="#0b3ba8"/></g>
</svg>
<div class="navbar">
<svg width="34" height="116" viewBox="0 0 34 116" fill="none" stroke="#999"><circle cx="26" cy="5" r="4"/><path d="M24 3l4 4M28 3l-4 4"/><path d="M15 20h6q3 0 3 3v10M17 38h-3q-8-1-8-9t9-9"/><circle cx="15" cy="29" r="5"/><path d="M13 50h5l-3 3z" fill="#777"/><path d="M4 56.500h26"/><path d="M8 65h11v11H8z" fill="#9cc890" stroke="#8ab57e"/><circle cx="19" cy="76" r="4" fill="#fff"/><path d="M22 79l3 3" stroke-width="2"/><path d="M13 92h5l-3 3z" fill="#777"/><circle cx="26" cy="108" r="4"/><path d="M24 108h4"/></svg>
<span class="two-d">2D</span>
</div>
</div>
<div class="vscroll"><svg width="10" height="7" viewBox="0 0 10 7"><path d="M1 6l4-4 4 4" fill="none" stroke="#444" stroke-width="2"/></svg><div class="thumb"></div><svg width="10" height="7" viewBox="0 0 10 7"><path d="M1 1l4 4 4-4" fill="none" stroke="#444" stroke-width="2"/></svg></div>
</div>
<div class="viewbar">
<button class="scale">1 : 100</button>
<svg class="i20"><use href="#c-detail"/></svg><svg class="i20"><use href="#c-style"/></svg><svg class="i20"><use href="#c-sun"/></svg><svg class="i20"><use href="#c-shadow"/></svg><svg class="i20"><use href="#c-crop"/></svg><svg class="i20"><use href="#c-cropv"/></svg><svg class="i20"><use href="#c-hide"/></svg><svg class="i20"><use href="#c-bulb"/></svg><svg class="i20"><use href="#c-temp"/></svg><svg class="i20"><use href="#c-anal"/></svg><svg class="i20"><use href="#c-cons"/></svg>
<svg class="back" width="8" height="10" viewBox="0 0 8 10"><path d="M6 1L2 5l4 4" fill="none" stroke="#333" stroke-width="2"/></svg>
<div class="hscroll"><div class="thumb"></div></div>
<svg width="8" height="10" viewBox="0 0 8 10"><path d="M2 1l4 4-4 4" fill="none" stroke="#333" stroke-width="2"/></svg>
<svg class="grip" width="20" height="20" viewBox="0 0 20 20"><path d="M7 14h3v3H7zM11 14h3v3h-3zM15 14h3v3h-3zM11 10h3v3h-3zM15 10h3v3h-3zM15 6h3v3h-3z" fill="#bbb"/></svg>
</div>
</section>

<aside class="props">
<div class="dock-title"><span>Properties</span><svg width="14" height="14" viewBox="0 0 14 14"><path d="M2 1l10 11M12 1L2 12" stroke="#333" stroke-width="2.500"/></svg></div>
<div class="type"><div class="thumbnail"><svg width="40" height="40"><use href="#big-plan"/></svg></div><span>Floor Plan</span></div>
<div class="picker"><select aria-label="Instance"><option>Floor Plan: Site</option></select><button><svg width="17" height="16" viewBox="0 0 17 16"><path d="M1 3l2-2h5v6H1zM9 3l2-2h5v4M1 8h7v7H1z" fill="none" stroke="#444"/><path d="M9 6h7v9H9z" fill="#fff" stroke="#245a8a"/><path d="M11 9h3M11 12h3" stroke="#245a8a"/></svg>Edit Type</button></div>
<div class="grid-wrap">
<table class="grid">
<colgroup><col class="c1"><col class="c2"><col class="c3"></colgroup>
<tbody>
<tr class="group"><th colspan="3"><div>Graphics<svg width="10" height="10"><use href="#chev2"/></svg></div></th></tr>
<tr><td>View Scale</td><td>&nbsp;1 : 100</td><td></td></tr>
<tr class="dim"><td>Scale Value &nbsp;&nbsp; 1:</td><td>100</td><td></td></tr>
<tr><td>Display Model</td><td>Normal</td><td></td></tr>
<tr><td>Detail Level</td><td>Coarse</td><td></td></tr>
<tr><td>Parts Visibility</td><td>Show Original</td><td></td></tr>
<tr><td>Visibility/Graphics ...</td><td class="b"><button>Edit...</button></td><td></td></tr>
<tr><td>Graphic Display O...</td><td class="b"><button>Edit...</button></td><td></td></tr>
<tr><td>Orientation</td><td>Project North</td><td></td></tr>
<tr><td>Wall Join Display</td><td>Clean all wall joins</td><td></td></tr>
<tr><td>Discipline</td><td>Architectural</td><td></td></tr>
<tr><td>Show Hidden Lines</td><td>By Discipline</td><td></td></tr>
<tr><td>Color Scheme Loca...</td><td>Background</td><td></td></tr>
<tr><td>Color Scheme</td><td class="b"><button>&lt;none&gt;</button></td><td></td></tr>
<tr><td>System Color Sche...</td><td class="b"><button>Edit...</button></td><td></td></tr>
<tr><td>Default Analysis Di...</td><td>None</td><td></td></tr>
<tr><td><label for="sun">Sun Path</label></td><td><input type="checkbox" id="sun"></td><td></td></tr>
<tr class="group"><th colspan="3"><div>Underlay<svg width="10" height="10"><use href="#chev2"/></svg></div></th></tr>
<tr><td>Range: Base Level</td><td>None</td><td></td></tr>
<tr class="dim"><td>Range: Top Level</td><td>Unbounded</td><td></td></tr>
<tr class="dim"><td>Underlay Orientati...</td><td>Look down</td><td></td></tr>
<tr class="group"><th colspan="3"><div>Extents<svg width="10" height="10"><use href="#chev2"/></svg></div></th></tr>
<tr><td><label for="cv">Crop View</label></td><td><input type="checkbox" id="cv"></td><td></td></tr>
<tr><td><label for="crv">Crop Region Visible</label></td><td><input type="checkbox" id="crv"></td><td></td></tr>
<tr><td><label for="ac">Annotation Crop</label></td><td><input type="checkbox" id="ac"></td><td></td></tr>
<tr><td></td><td class="b"><button aria-label="Edit"></button></td><td></td></tr>
</tbody>
</table>
<div class="pscroll"><div class="thumb"></div></div>
</div>
<div class="foot"><a href="#help">Properties help</a><button disabled>Apply</button></div>
</aside>
</main>

<footer class="status">
<span class="hint">Click to select, TAB for alternates, CTRL adds, SHIFT unselects.</span>
<svg class="i20"><use href="#b-work"/></svg>
<select aria-label="Active workset"><option></option></select>
<svg class="i20"><use href="#b-req"/></svg><span class="count">:0</span>
<svg class="i20"><use href="#b-opt"/></svg><svg class="i20"><use href="#b-add"/></svg>
<select aria-label="Design option"><option>Main Model</option></select>
<div class="right"><svg class="i20"><use href="#b-link"/></svg><svg class="i20"><use href="#b-under"/></svg><svg class="i20"><use href="#b-pin"/></svg><svg class="i20"><use href="#b-face"/></svg><svg class="i20"><use href="#b-drag"/></svg><svg class="i20 gear"><use href="#b-gear"/></svg><span class="filter"><svg class="i20"><use href="#b-filter"/></svg>:0</span></div>
</footer>
</body>
</html>
```
FILE: styles.css
```css
* { box-sizing: border-box; }
html, body { height: 100%; }
body {
  margin: 0;
  display: flex;
  flex-direction: column;
  overflow: hidden;
  background: #eee;
  color: #222;
  font: 14px/20px "Open Sans", "Noto Sans", sans-serif;
}
button { margin: 0; padding: 0; border: 0; background: none; font: inherit; color: inherit; }
h2 { margin: 0; font: inherit; }
svg { display: block; flex: none; }
symbol { overflow: visible; }
.sprite { position: absolute; width: 0; height: 0; }
.i38 { width: 38px; height: 38px; }
.i20 { width: 20px; height: 20px; }
.dot { fill: none; stroke: #8a8a8a; stroke-dasharray: 1 1; }

.menubar { display: flex; align-items: stretch; height: 28px; padding-top: 3px; background: #cbcbcb; color: #444; flex: none; }
.file { width: 57px; background: #2a7aaf; color: #e8f3fa; }
.menu { display: flex; margin-left: 3px; }
.menu button { padding: 0 12px; white-space: nowrap; }
.menu button:nth-child(n+9) { padding: 0 13px; }
.menu .on { background: #eee; color: #222; }
.toggle { margin-left: 28px; }

.ribbon { display: flex; height: 121px; border-bottom: 1px solid #c8c8c8; background: #eee; color: #444; flex: none; }
.panel { display: flex; flex-direction: column; padding: 0 2px; border-right: 1px solid #d5d5d5; }
.panel h2 { height: 22px; display: flex; align-items: center; justify-content: center; gap: 8px; }
.tools { display: flex; flex: 1; }
.select { width: 73px; padding-left: 9px; }
.select h2 { justify-content: flex-start; }
.circulation { width: 177px; padding-left: 4px; }
.room { width: 336px; }
.room .stack { padding-left: 9px; }
.opening { width: 192px; }
.datum { width: 79px; }
.work { width: 160px; border-right: 0; }
.tool { display: flex; flex-direction: column; align-items: center; padding-top: 7px; gap: 7px; text-align: center; }
.tool .caret { margin-top: -5px; }
.side { display: flex; align-items: center; gap: 2px; padding-left: 9px; }
.side .caret { margin-top: 0; }
.active { width: 54px; height: 90px; margin-top: 4px; padding-top: 3px; border: 1px solid #2f6696; background: linear-gradient(#c6def5, #a3c8ee 60%, #b4d4f2); }
.w48 { width: 48px; }
.w56 { width: 56px; }
.w64 { width: 64px; }
.w72 { width: 72px; }
.w80 { width: 80px; }
.w104 { width: 104px; }
.caret { display: block; width: 0; height: 0; border: 3px solid transparent; border-top: 4px solid #333; border-bottom: 0; }
.caret.big { border-width: 5px 5px 0; }
.stack { display: flex; flex-direction: column; gap: 11px; padding: 9px 0 0 6px; }
.stack.two { padding-top: 24px; padding-left: 4px; }
.stack button { display: flex; align-items: center; gap: 7px; height: 20px; white-space: nowrap; }
.off { color: #b0b0b0; }
.options { height: 33px; flex: none; }

.work-area { display: flex; flex: 1; min-height: 0; border-top: 2px solid #cbcbcb; }
.dock-title { display: flex; align-items: center; justify-content: space-between; height: 24px; padding: 0 3px 0 4px; color: #555; flex: none; }
.browser { display: flex; flex-direction: column; width: 348px; padding: 0 2px 0 0; border-right: 3px solid #cbcbcb; border-bottom: 2px solid #cbcbcb; flex: none; }
.tree { flex: 1; margin: 0; padding: 1px 0 0; list-style: none; background: #fff; color: #222; }
.tree li { display: flex; align-items: center; height: 22px; }
.tree .g { width: 26px; height: 22px; overflow: visible; }
.tree .i20 { margin-left: 2px; background: #fff; }
.tree span { margin-left: 6px; padding: 0 2px; }
.tree .i20 + span { margin-left: 4px; }
.tree .current { background: #e3e3e3; font-weight: 700; padding: 1px 3px; margin-left: 5px; color: #000; }

.views { display: flex; flex-direction: column; flex: 1; min-width: 0; border-bottom: 2px solid #cbcbcb; background: #fff; }
.doc-tabs { display: flex; height: 25px; background: #cbcbcb; color: #444; flex: none; }
.doc-tabs button { display: flex; align-items: center; gap: 9px; width: 160px; padding: 0 6px; white-space: nowrap; }
.doc-tabs .wide { width: 230px; }
.doc-tabs .i20 { opacity: .6; }
.doc-tabs .on { background: #fff; font-weight: 700; color: #333; }
.doc-tabs .on .i20 { opacity: 1; }
.doc-tabs .x { margin-left: auto; }
.doc-tabs .list { width: 12px; margin: 0 6px 0 auto; padding: 0; }
.stage { display: flex; flex: 1; min-height: 0; background: #fff; }
.canvas { position: relative; flex: 1; min-width: 0; overflow: hidden; padding-left: 2px; }
.plan { width: 1210px; height: 730px; }
.navbar { position: absolute; top: 2px; right: 0; width: 36px; height: 118px; border: 2px solid #c4c4c4; border-radius: 6px; background: #f6f6f6; }
.two-d { position: absolute; left: 15px; top: 28px; font-size: 11px; font-weight: 700; color: #8aa5c6; }
.vscroll { display: flex; flex-direction: column; align-items: center; width: 20px; margin-right: 4px; padding: 9px 0 6px; background: #efefef; }
.thumb { background: #cbcbcb; }
.vscroll .thumb { width: 20px; height: 21px; margin: 340px 0 auto; }
.viewbar { display: flex; align-items: center; height: 21px; margin: 0 0 2px 2px; background: #efefef; gap: 5px; flex: none; }
.scale { width: 82px; margin-left: 5px; }
.back { margin-left: 2px; }
.hscroll { flex: 1; align-self: stretch; display: flex; }
.hscroll .thumb { width: 21px; margin-left: 395px; }
.grip { margin-left: 6px; }

.props { display: flex; flex-direction: column; width: 320px; padding-left: 3px; overflow: hidden; border-left: 1px solid #cbcbcb; border-bottom: 2px solid #cbcbcb; flex: none; }
.props .dock-title { width: 330px; padding-left: 1px; border-bottom: 1px solid #d8d8d8; }
.type { display: flex; align-items: center; gap: 6px; height: 88px; padding: 4px 3px; color: #444; flex: none; }
.thumbnail { display: grid; place-items: center; width: 82px; height: 82px; border: 1px solid #cfcfcf; }
.picker { display: flex; align-items: center; gap: 6px; height: 29px; flex: none; }
.picker button { display: flex; align-items: center; gap: 4px; white-space: nowrap; }
select { appearance: none; border: 1px solid #adadad; border-radius: 0; font: inherit; color: #222;
  background: #e3e3e3 url("data:image/svg+xml,%3Csvg xmlns='http://www.w3.org/2000/svg' width='10' height='6'%3E%3Cpath d='M1 0l4 5 4-5' fill='none' stroke='%23666'/%3E%3C/svg%3E") no-repeat right 5px center; }
.picker select { width: 235px; height: 27px; padding: 0 3px; flex: none; }
.grid-wrap { display: flex; flex: 1; min-height: 0; overflow: hidden; }
.grid { width: 310px; height: max-content; border-collapse: collapse; table-layout: fixed; background: #fff; flex: none; }
.c1, .c2 { width: 147px; }
.grid td, .grid th { height: 24px; padding: 0 0 0 3px; font-weight: 400; text-align: left; white-space: nowrap; overflow: hidden; line-height: 20px; }
.grid td { border: 1px dotted #777; border-left: 0; }
.grid td:first-child { padding-left: 10px; }
.grid .group th { height: 24px; padding-left: 2px; background: #d9d9d9; }
.group div { display: flex; justify-content: space-between; padding-right: 5px; }
.dim td { color: #888; }
.grid .b { padding: 1px 1px 0 2px; }
.b button { display: block; width: 100%; height: 21px; border: 1px solid #b5b5b5; border-right-width: 2px; border-bottom-width: 2px; background: #e1e1e1; line-height: 18px; }
input[type="checkbox"] { appearance: none; display: block; width: 16px; height: 16px; margin: 0 1px; border: 1px solid #333; background: #fff; }
.pscroll { flex: 1; padding-top: 21px; background: #efefef; }
.pscroll .thumb { height: 362px; margin-left: 1px; }
.foot { display: flex; align-items: center; justify-content: space-between; width: 326px; height: 33px; padding: 0 0 3px 2px; flex: none; }
.foot a { color: #2a6fa5; }
.foot button { width: 84px; height: 27px; background: #cbcbcb; color: #8d8d8d; }

.status { display: flex; align-items: center; height: 31px; padding: 2px 0 0 2px; background: #cbcbcb; color: #333; flex: none; }
.hint { width: 671px; }
.status select { width: 254px; height: 23px; margin: 0 8px; padding: 0 2px; border: 0; background-color: #fff; color: #888; }
.count { width: 45px; padding-left: 4px; }
.status .i20 + .i20 { margin-left: 10px; }
.right { display: flex; align-items: center; margin-left: auto; padding-right: 71px; }
.filter { display: flex; align-items: center; gap: 2px; margin-left: 8px; }
```
